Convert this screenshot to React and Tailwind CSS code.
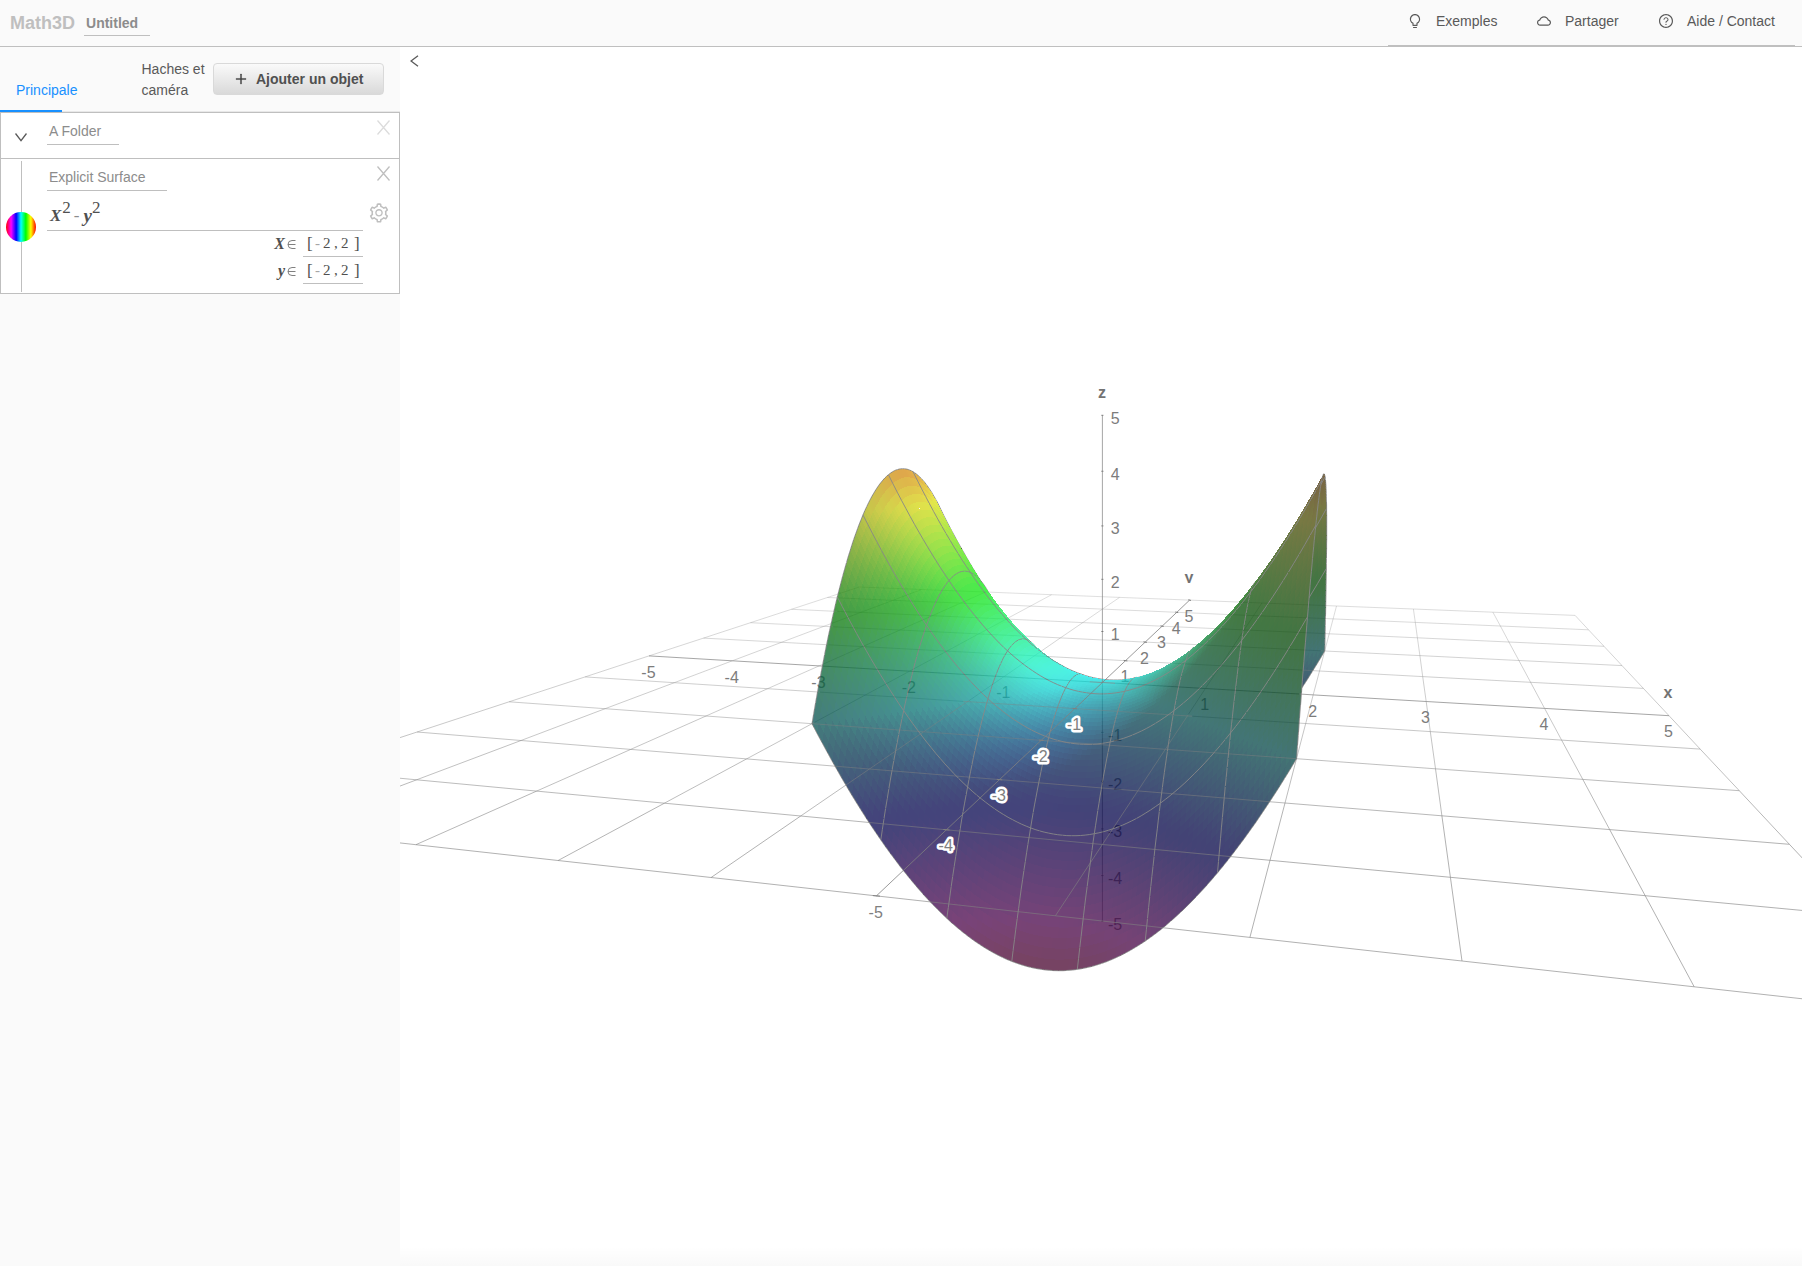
import React from "react";
import {
  AiOutlineBulb,
  AiOutlineCloud,
  AiOutlineQuestionCircle,
  AiOutlineSetting,
  AiOutlinePlus,
} from "react-icons/ai";

/* ---------- camera ---------- */

const CAMERA = [2.504, -10.02, 5.01];

function depth(x, y, z) {
  return 1 - 0.022196 * x + 0.0886 * y - 0.011225 * z;
}

function project(x, y, z) {
  const w = depth(x, y, z);
  return [
    (1102.4 + 76.27 * x + 122.85 * y - 12.375 * z) / w,
    (682.5 - 9.246 * x + 36.7 * y - 58.1 * z) / w,
  ];
}

const fmt = (p) => p[0].toFixed(1) + " " + p[1].toFixed(1);

/* ---------- surface z = x^2 - y^2 ---------- */

const R = 2;
const f = (x, y) => x * x - y * y;

function hueToRgb(h) {
  const k = (n) => (n + h / 30) % 12;
  const ch = (n) => 0.5 - 0.5 * Math.max(-1, Math.min(k(n) - 3, 9 - k(n), 1));
  return [ch(0), ch(8), ch(4)];
}

const unit = (v) => {
  const l = Math.hypot(v[0], v[1], v[2]);
  return [v[0] / l, v[1] / l, v[2] / l];
};
const dot = (a, b) => a[0] * b[0] + a[1] * b[1] + a[2] * b[2];
const LIGHT = unit([1, 2, 2]);

function shade(x, y) {
  const z = f(x, y);
  const rgb = hueToRgb(180 - 36.2 * z);
  let n = unit([-x, y, 1]);
  const view = unit([CAMERA[0] - x, CAMERA[1] - y, (CAMERA[2] - z) / 2]);
  if (dot(n, view) < 0) n = [-n[0], -n[1], -n[2]];
  const cos = dot(n, LIGHT);
  const diffuse = 0.9 * Math.max(0, cos) + 0.1 * (0.5 + 0.5 * cos);
  const half = unit([LIGHT[0] + view[0], LIGHT[1] + view[1], LIGHT[2] + view[2]]);
  const spec = Math.pow(Math.max(0, dot(n, half)), 16);
  const out = rgb.map((c) => {
    const lin = c * c + 0.005;
    const off = 1 - (1 - lin) * (1 - lin);
    return Math.round(255 * Math.min(1, Math.sqrt(lin * (diffuse * 0.91 + 0.05) + 0.25 * off * spec)));
  });
  return `rgb(${out[0]},${out[1]},${out[2]})`;
}

const N = 98;
const LINE_EVERY = N / 7;

function buildSurface() {
  const at = (i) => -R + (2 * R * i) / N;
  const items = [];
  for (let j = N - 1; j >= 0; j--) {
    for (let i = 0; i < N; i++) {
      const x0 = at(i), x1 = at(i + 1), y0 = at(j), y1 = at(j + 1);
      const a = fmt(project(x0, y0, f(x0, y0)));
      const b = fmt(project(x1, y0, f(x1, y0)));
      const c = fmt(project(x1, y1, f(x1, y1)));
      const d = fmt(project(x0, y1, f(x0, y1)));
      const color = shade((x0 + x1) / 2, (y0 + y1) / 2);
      items.push(<path key={`q${i}-${j}`} d={`M${a}L${b}L${c}L${d}Z`} fill={color} shapeRendering="crispEdges" />);
      let wire = "";
      if (i % LINE_EVERY === 0) wire += `M${a}L${d}`;
      if ((j + 1) % LINE_EVERY === 0) wire += `M${d}L${c}`;
      if (i === N - 1) wire += `M${b}L${c}`;
      if (j === 0) wire += `M${a}L${b}`;
      if (wire) items.push(<path key={`w${i}-${j}`} d={wire} stroke="#606060" strokeWidth="0.9" fill="none" />);
    }
  }
  return items;
}

/* ---------- grid and axes ---------- */

function hidden(p) {
  const steps = 240;
  let prev = null;
  for (let s = 0; s < steps; s++) {
    const t = 0.4 + (0.597 * s) / (steps - 1);
    const q = CAMERA.map((c, k) => c + (p[k] - c) * t);
    if (Math.abs(q[0]) > R || Math.abs(q[1]) > R) {
      prev = null;
      continue;
    }
    const side = q[2] > f(q[0], q[1]);
    if (prev !== null && side !== prev) return true;
    prev = side;
  }
  return false;
}

function split(from, to, style, key, back, front) {
  const pieces = 24;
  const lerp = (t) => from.map((c, k) => c + (to[k] - c) * t);
  let run = null;
  const flush = (end) => {
    const el = (
      <path key={`${key}-${run.start}`} d={`M${fmt(project(...lerp(run.start / pieces)))}L${fmt(project(...lerp(end / pieces)))}`} {...style} />
    );
    (run.hid ? back : front).push(el);
  };
  for (let i = 0; i < pieces; i++) {
    const hid = hidden(lerp((i + 0.5) / pieces));
    if (run === null) run = { start: i, hid };
    else if (run.hid !== hid) {
      flush(i);
      run = { start: i, hid };
    }
  }
  flush(pieces);
}

function buildLines() {
  const back = [];
  const front = [];
  const gridStyle = (x, y) => ({ stroke: "#808080", strokeWidth: Math.min(0.62, 0.38 / depth(x, y, 0)).toFixed(2) });
  for (let k = -5; k <= 5; k++) {
    for (let m = -5; m < 5; m++) {
      if (k !== 0) {
        split([m, k, 0], [m + 1, k, 0], gridStyle(m + 0.5, k), `h${k},${m}`, back, front);
        split([k, m, 0], [k, m + 1, 0], gridStyle(k, m + 0.5), `v${k},${m}`, back, front);
      } else {
        split([m, 0, 0], [m + 1, 0, 0], { stroke: "#808080", strokeWidth: 0.7 }, `ax${m}`, back, front);
        split([0, m, 0], [0, m + 1, 0], { stroke: "#808080", strokeWidth: 0.8 }, `ay${m}`, back, front);
        split([0, 0, m], [0, 0, m + 1], { stroke: "#808080", strokeWidth: 0.7 }, `az${m}`, back, front);
      }
    }
    if (k !== 0) {
      const p = project(0, k, 0);
      const half = 2 / depth(0, k, 0);
      (k < 0 ? front : back).push(
        <path key={`ty${k}`} d={`M${p[0] - half} ${p[1] - 0.3}L${p[0] + half} ${p[1] + 0.3}`} stroke="#808080" strokeWidth="1" />
      );
      const q = project(0, 0, k);
      back.push(<path key={`tz${k}`} d={`M${q[0] - 1} ${q[1]}h2`} stroke="#777" strokeWidth="1" />);
    }
  }
  return { back, front };
}

function Label({ x, y, children, bold }) {
  return (
    <text
      x={x}
      y={y + 5.7}
      textAnchor="middle"
      className={bold ? "text-[16px] font-bold" : "text-[16px]"}
      fill={bold ? "#737373" : "#808080"}
      stroke="#fff"
      strokeWidth="5"
      strokeLinejoin="round"
      paintOrder="stroke"
    >
      {children}
    </text>
  );
}

function PlainLabel({ x, y, children }) {
  return (
    <text x={x} y={y + 5.7} textAnchor="middle" className="text-[16px]" fill="#7c7c7c">
      {children}
    </text>
  );
}

const SURFACE = buildSurface();
const LINES = buildLines();
const TICKS = [-5, -4, -3, -2, -1, 1, 2, 3, 4, 5];

function Graph() {
  return (
    <svg className="block h-[1219px] w-[1402px]" viewBox="400 47 1402 1219" fontFamily='"Liberation Sans", Arial, sans-serif'>
      <defs>
        <clipPath id="axis-name">
          <rect x="1170" y="560" width="40" height="23" />
        </clipPath>
      </defs>
      {LINES.back}
      <g>
        {TICKS.map((t) => {
          const p = project(t, 0, 0);
          return <PlainLabel key={`x${t}`} x={p[0] - 0.6} y={p[1] + 16}>{t}</PlainLabel>;
        })}
        {TICKS.map((t) => {
          const p = project(0, 0, t);
          return <PlainLabel key={`z${t}`} x={p[0] + 12.7} y={p[1] + 2.7}>{t}</PlainLabel>;
        })}
        {TICKS.filter((t) => t > 0).map((t) => {
          const p = project(0, t, 0);
          return <PlainLabel key={`y${t}`} x={p[0] - 0.6} y={p[1] + 16}>{t}</PlainLabel>;
        })}
        <Label x={1102} y={391.8} bold>z</Label>
        <Label x={1668} y={691.8} bold>x</Label>
        <g clipPath="url(#axis-name)">
          <Label x={1189} y={577} bold>y</Label>
        </g>
      </g>
      <g opacity="0.75">{SURFACE}</g>
      {LINES.front}
      {TICKS.filter((t) => t < 0).map((t) => {
        const p = project(0, t, 0);
        return <Label key={`y${t}`} x={p[0] - 0.7} y={p[1] + 16}>{t}</Label>;
      })}
    </svg>
  );
}

/* ---------- chrome ---------- */

function NavItem({ icon: Icon, label, className }) {
  return (
    <div className={"flex items-center " + className}>
      <Icon className="size-4" />
      <span className="ml-[13px]">{label}</span>
    </div>
  );
}

function Header() {
  return (
    <header className="flex h-[47px] shrink-0 items-start justify-between border-b border-[#bfbfbf] bg-[#fafafa]">
      <div className="flex items-start pl-[10px]">
        <span className="mt-[9px] text-[18px] leading-7 font-bold text-[#bfbfbf]">Math3D</span>
        <div className="mt-3 ml-[9px] h-6 w-[66px] border-b border-[#bfbfbf] pl-[2px] text-sm leading-[22px] font-bold text-[#8c8c8c]">
          Untitled
        </div>
      </div>
      <nav className="mr-[7px] flex h-[46px] w-[407px] border-b border-[#bfbfbf] pb-[3px] text-sm text-[#595959]">
        <NavItem icon={AiOutlineBulb} label="Exemples" className="ml-[19px] w-[129px]" />
        <NavItem icon={AiOutlineCloud} label="Partager" className="w-[122px]" />
        <NavItem icon={AiOutlineQuestionCircle} label="Aide / Contact" className="" />
      </nav>
    </header>
  );
}

function CloseMark({ className }) {
  return (
    <svg className={"h-[15px] w-[13px] " + className} viewBox="0 0 13 15" fill="none" stroke="currentColor" strokeWidth="1.3">
      <path d="M0.5 0.5L12.5 14.5M12.5 0.5L0.5 14.5" />
    </svg>
  );
}

function Range({ name }) {
  return (
    <div className="flex h-[27px] items-end justify-end">
      <span className="mb-[3px] text-base leading-5 font-bold italic">{name}</span>
      <svg className="mb-2 ml-[2px] h-[9px] w-[9px]" viewBox="0 0 9 9" fill="none" stroke="#808080">
        <path d="M8.5 0.5H5a4 4 0 0 0 0 8h3.5M1 4.5h7.5" />
      </svg>
      <div className="ml-[7px] flex h-[25px] w-[60px] items-center border-b border-[#bfbfbf] pb-px pl-1 text-[15px]">
        <span className="w-2 text-[17px] leading-5">[</span>
        <span className="w-2 text-[#a6a6a6]">-</span>
        <span className="w-[11px]">2</span>
        <span className="w-[7px]">,</span>
        <span className="w-[13px]">2</span>
        <span className="text-[17px] leading-5">]</span>
      </div>
    </div>
  );
}

function Sidebar() {
  return (
    <aside className="w-[400px] shrink-0 bg-[#fafafa]">
      <div className="flex h-[65px] border-b border-[#e8e8e8] text-sm leading-[21px] text-[#595959]">
        <div className="flex h-[65px] w-[62px] items-end border-b-2 border-[#1890ff] pb-[9px] pl-4 whitespace-nowrap text-[#1890ff]">
          Principale
        </div>
        <div className="mt-3 ml-[79.5px] w-[71.5px] whitespace-nowrap">
          Haches et
          <br />
          caméra
        </div>
        <button className="mt-4 flex h-8 w-[171px] items-center rounded border border-[#d9d9d9] bg-linear-to-b from-[#fafafa] to-[#d9d9d9] pl-5 font-bold whitespace-nowrap text-[#505050]">
          <AiOutlinePlus className="size-[14px] stroke-[30] text-[#404040]" />
          <span className="ml-2">Ajouter un objet</span>
        </button>
      </div>

      <div className="h-[182px] border border-[#bfbfbf] bg-white text-sm text-[#8c8c8c]">
        <div className="flex h-[46px] border-b border-[#bfbfbf]">
          <svg className="mt-5 ml-[14px] h-[9px] w-3" viewBox="0 0 12 9" fill="none" stroke="#595959" strokeWidth="1.3">
            <path d="M0.5 0.5L6 7.7L11.5 0.5" />
          </svg>
          <div className="mt-[7px] ml-5 h-[25px] w-[72px] border-b border-[#bfbfbf] pl-[2px] leading-[22px]">A Folder</div>
          <CloseMark className="mt-[7px] mr-[9px] ml-auto text-[#dcdcdc]" />
        </div>
        <div className="flex h-[134px]">
          <div className="relative w-[46px]">
            <div className="mt-[2px] ml-5 h-[131px] w-px bg-[#bfbfbf]" />
            <div className="absolute top-[53px] left-[5px] size-[30px] rounded-full bg-[linear-gradient(to_right,#ff0000,#ff00ff_17%,#0000ff_34%,#00ffff_50%,#00ff00_66%,#ffff00_83%,#ff0000)]" />
          </div>
          <div className="w-[316px]">
            <div className="mt-[7px] h-[25px] w-[120px] border-b border-[#bfbfbf] pl-[2px] leading-[22px]">Explicit Surface</div>
            <div className="flex h-10 items-end border-b border-[#bfbfbf] pl-[3px] font-['Liberation_Serif',serif] text-[#505050]">
              <span className="mb-1 text-[17px] leading-5 font-bold italic">X</span>
              <span className="mb-3 ml-px text-[17px] leading-5">2</span>
              <span className="mb-1 ml-[3px] text-[17px] leading-5 text-[#8c8c8c]">-</span>
              <span className="mb-1 ml-1 text-[19px] leading-5 font-bold italic">y</span>
              <span className="mb-3 text-[17px] leading-5">2</span>
            </div>
            <div className="-mt-px font-['Liberation_Serif',serif] text-[#505050]">
              <Range name="X" />
              <Range name="y" />
            </div>
          </div>
          <div className="flex flex-1 flex-col items-end">
            <CloseMark className="mt-[7px] mr-[9px] text-[#bfbfbf]" />
            <AiOutlineSetting className="mt-[21px] mr-[9px] size-[22px] text-[#bfbfbf]" />
          </div>
        </div>
      </div>
    </aside>
  );
}

export default function App() {
  return (
    <div className="flex h-[1266px] w-[1802px] flex-col overflow-hidden bg-white font-['Liberation_Sans',Arial,sans-serif]">
      <Header />
      <div className="flex flex-1">
        <Sidebar />
        <main className="relative w-[1402px] overflow-hidden">
          <Graph />
          <svg className="absolute top-2 left-[10px] h-3 w-[9px]" viewBox="0 0 9 12" fill="none" stroke="#595959" strokeWidth="1.3">
            <path d="M8 0.7L1 6L8 11.3" />
          </svg>
          <div className="absolute inset-x-0 bottom-0 h-5 bg-linear-to-b from-transparent to-black/[0.025]" />
        </main>
      </div>
    </div>
  );
}
